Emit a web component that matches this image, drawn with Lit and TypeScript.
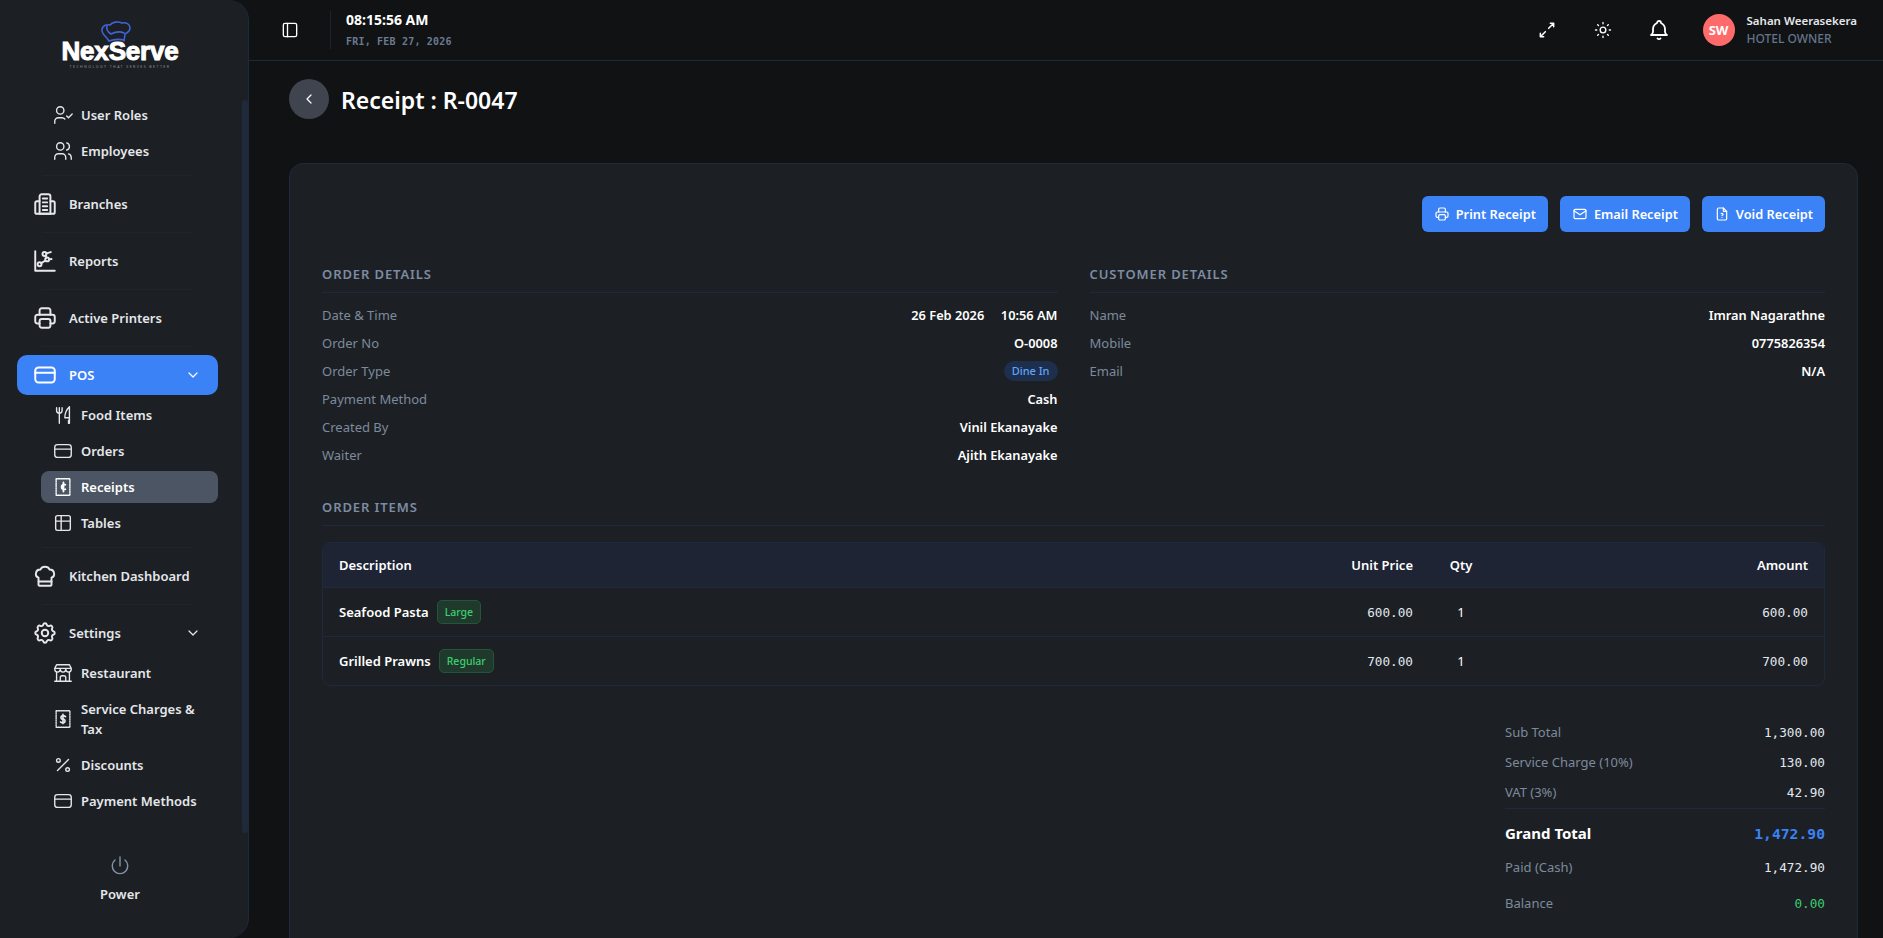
import { LitElement, html, css, svg } from 'lit';
import { customElement } from 'lit/decorators.js';
import { classMap } from 'lit/directives/class-map.js';

const icons: Record<string, unknown> = {
  userCheck: svg`<circle cx="9" cy="7" r="4"/><path d="M3 21v-2a4 4 0 0 1 4-4h4a4 4 0 0 1 3 1.4"/><path d="M16 13l2 2l4-4"/>`,
  users: svg`<circle cx="9" cy="7" r="4"/><path d="M3 21v-2a4 4 0 0 1 4-4h4a4 4 0 0 1 4 4v2"/><path d="M16 3.13a4 4 0 0 1 0 7.75"/><path d="M21 21v-2a4 4 0 0 0-3-3.85"/>`,
  building: svg`<path d="M7 21V5a2 2 0 0 1 2-2h6a2 2 0 0 1 2 2v16z"/><path d="M7 9.5H4.5A1.5 1.5 0 0 0 3 11v8.5A1.5 1.5 0 0 0 4.5 21h15a1.5 1.5 0 0 0 1.5-1.5V11a1.5 1.5 0 0 0-1.5-1.5H17"/><path d="M10 7h4M10 10.5h4M10 14h4M10 17.5h4"/>`,
  chartDots: svg`<path d="M3 3v18h18"/><circle cx="7" cy="15" r="1.8"/><circle cx="11.5" cy="5.5" r="1.8"/><circle cx="14" cy="10.5" r="1.8"/><path d="M12.4 7.1l.8 1.8M12.5 11.5l-4 2.5M13.3 5l4-1.2M15.8 10.5l2.2-.3"/>`,
  printer: svg`<path d="M17 17h2a2 2 0 0 0 2-2v-4a2 2 0 0 0-2-2H5a2 2 0 0 0-2 2v4a2 2 0 0 0 2 2h2"/><path d="M17 9V5a2 2 0 0 0-2-2H9a2 2 0 0 0-2 2v4"/><rect x="7" y="13" width="10" height="8" rx="2"/>`,
  card: svg`<rect x="3" y="5" width="18" height="14" rx="3"/><path d="M3 10h18"/>`,
  kitchen: svg`<path d="M19 3v12h-5c-.023-3.681.184-7.406 5-12zm0 12v6h-1v-3"/><path d="M8 4v17M5 4v3a3 3 0 1 0 6 0V4"/>`,
  receiptCent: svg`<path d="M4.5 3h15v18h-15z" stroke-dasharray="1.5 1.1"/><path stroke-width="2" d="M14.5 9.5a2.8 2.8 0 1 0 0 5M12.5 7v10"/>`,
  receiptDollar: svg`<path d="M4.5 3h15v18h-15z" stroke-dasharray="1.5 1.1"/><path stroke-width="1.8" d="M14.7 9.5A2 2 0 0 0 13 8.6h-2a2 2 0 0 0 0 3.7h2a2 2 0 0 1 0 3.7h-2a2 2 0 0 1-1.7-.9M12 7v10"/>`,
  table: svg`<rect x="4" y="4" width="16" height="16" rx="2"/><path d="M4 10h16M10 4v16"/>`,
  chefHat: svg`<path d="M12 3.5c2 0 3.6 1 4.3 2.6a3.9 3.9 0 0 1 1.7 7.5V20a1 1 0 0 1-1 1H7a1 1 0 0 1-1-1v-6.4a3.9 3.9 0 0 1 1.700-7.5C8.4 4.5 10 3.5 12 3.5z"/><path d="M6.2 17H18"/>`,
  settings: svg`<path d="M10.325 4.317c.426-1.756 2.924-1.756 3.35 0a1.724 1.724 0 0 0 2.573 1.066c1.543-.94 3.31.826 2.37 2.37a1.724 1.724 0 0 0 1.065 2.572c1.756.426 1.756 2.924 0 3.35a1.724 1.724 0 0 0-1.066 2.573c.94 1.543-.826 3.31-2.37 2.37a1.724 1.724 0 0 0-2.572 1.065c-.426 1.756-2.924 1.756-3.35 0a1.724 1.724 0 0 0-2.573-1.066c-1.543.94-3.31-.826-2.37-2.37a1.724 1.724 0 0 0-1.065-2.572c-1.756-.426-1.756-2.924 0-3.35a1.724 1.724 0 0 0 1.066-2.573c-.94-1.543.826-3.31 2.37-2.37c1 .608 2.296.07 2.572-1.065z"/><circle cx="12" cy="12" r="3"/>`,
  store: svg`<path d="M3 21h18"/><path d="M3 7v1a3 3 0 0 0 6 0V7m0 1a3 3 0 0 0 6 0V7m0 1a3 3 0 0 0 6 0V7H3l2-4h14l2 4"/><path d="M5 21V10.85M19 21V10.85M9 21v-4a2 2 0 0 1 2-2h2a2 2 0 0 1 2 2v4"/>`,
  percent: svg`<circle cx="17" cy="17" r="2"/><circle cx="7" cy="7" r="2"/><path d="M6 18L18 6"/>`,
  power: svg`<path d="M7 6a7.75 7.75 0 1 0 10 0"/><path d="M12 3v9"/>`,
  expand: svg`<path d="M16 4h4v4M14 10l6-6M8 20H4v-4M4 20l6-6"/>`,
  sun: svg`<circle cx="12" cy="12" r="3.4"/><path d="M3 12h1.5M12 3v1.5M19.5 12H21M12 19.5V21M5.6 5.6l1 1M18.4 5.6l-1 1M17.4 17.4l1 1M6.6 17.4l-1 1"/>`,
  bell: svg`<path d="M10 5a2 2 0 1 1 4 0a7 7 0 0 1 4 6v3a4 4 0 0 0 2 3H4a4 4 0 0 0 2-3v-3a7 7 0 0 1 4-6"/><path d="M10.5 20.5a2 2 0 0 0 3 0"/>`,
  panel: svg`<rect x="4" y="4" width="16" height="16" rx="2"/><path d="M9 4v16"/>`,
  mail: svg`<rect x="3" y="5" width="18" height="14" rx="2"/><path d="M3 7l9 6l9-6"/>`,
  fileQuestion: svg`<path d="M14 3v4a1 1 0 0 0 1 1h4"/><path d="M17 21H7a2 2 0 0 1-2-2V5a2 2 0 0 1 2-2h7l5 5v11a2 2 0 0 1-2 2z"/><path d="M12 17v.01M12 14a1.5 1.5 0 1 0-1.14-2.474"/>`,
  chevronDown: svg`<path d="M6 9l6 6l6-6"/>`,
  chevronLeft: svg`<path d="M15 6l-6 6l6 6"/>`,
};

type NavEntry = { type: 'main' | 'sub' | 'divider'; label?: string; icon?: string; chevron?: boolean; active?: boolean };

const navItems: NavEntry[] = [
  { type: 'sub', label: 'User Roles', icon: 'userCheck' },
  { type: 'sub', label: 'Employees', icon: 'users' },
  { type: 'divider' },
  { type: 'main', label: 'Branches', icon: 'building' },
  { type: 'divider' },
  { type: 'main', label: 'Reports', icon: 'chartDots' },
  { type: 'divider' },
  { type: 'main', label: 'Active Printers', icon: 'printer' },
  { type: 'divider' },
  { type: 'main', label: 'POS', icon: 'card', chevron: true, active: true },
  { type: 'sub', label: 'Food Items', icon: 'kitchen' },
  { type: 'sub', label: 'Orders', icon: 'card' },
  { type: 'sub', label: 'Receipts', icon: 'receiptCent', active: true },
  { type: 'sub', label: 'Tables', icon: 'table' },
  { type: 'divider' },
  { type: 'main', label: 'Kitchen Dashboard', icon: 'chefHat' },
  { type: 'divider' },
  { type: 'main', label: 'Settings', icon: 'settings', chevron: true },
  { type: 'sub', label: 'Restaurant', icon: 'store' },
  { type: 'sub', label: 'Service Charges & Tax', icon: 'receiptDollar' },
  { type: 'sub', label: 'Discounts', icon: 'percent' },
  { type: 'sub', label: 'Payment Methods', icon: 'card' },
];

const orderDetails = [
  ['Date & Time', '26 Feb 2026 \u00a0\u00a0\u00a0 10:56 AM'],
  ['Order No', 'O-0008'],
  ['Order Type', 'Dine In'],
  ['Payment Method', 'Cash'],
  ['Created By', 'Vinil Ekanayake'],
  ['Waiter', 'Ajith Ekanayake'],
];

const customerDetails = [
  ['Name', 'Imran Nagarathne'],
  ['Mobile', '0775826354'],
  ['Email', 'N/A'],
];

const orderItems = [
  { name: 'Seafood Pasta', size: 'Large', price: '600.00', qty: '1', amount: '600.00' },
  { name: 'Grilled Prawns', size: 'Regular', price: '700.00', qty: '1', amount: '700.00' },
];

const icon = (name: string, size: number, strokeWidth = 2) => html`
  <svg class="icon" width=${size} height=${size} viewBox="0 0 24 24" fill="none" stroke="currentColor"
    stroke-width=${strokeWidth} stroke-linecap="round" stroke-linejoin="round">${icons[name]}</svg>
`;

@customElement('app-root')
export class AppRoot extends LitElement {
  static styles = css`
    :host {
      display: flex;
      height: 938px;
      overflow: hidden;
      background: #101214;
      color: #fff;
      font-family: 'Noto Sans', 'Open Sans', sans-serif;
      font-size: 13px;
    }

    .icon { display: block; flex: none; }

    /* sidebar */
    .sidebar {
      width: 249px;
      flex: none;
      box-sizing: border-box;
      display: flex;
      flex-direction: column;
      background: #1c2024;
      border-right: 1px solid #1e293b;
      border-radius: 0 20px 20px 0;
    }

    .logo {
      height: 95px;
      flex: none;
      display: flex;
      flex-direction: column;
      align-items: center;
      padding: 20px 8px 0 0;
      box-sizing: border-box;
    }

    .logo-hat { margin-left: -8px; }

    .logo-name {
      font-family: 'Liberation Sans', sans-serif;
      font-weight: 700;
      font-size: 26px;
      line-height: 20px;
      letter-spacing: -0.2px;
      margin-top: -3px;
      -webkit-text-stroke: 1px #fff;
    }

    .logo-tag {
      font-size: 3.6px;
      line-height: 6px;
      letter-spacing: 1.4px;
      color: #8a8f96;
      margin-top: 3px;
    }

    .nav-wrap {
      flex: none;
      height: 738px;
      display: flex;
    }

    .nav {
      flex: 1;
      padding: 0 24px 0 17px;
      min-width: 0;
    }

    .thumb {
      width: 6px;
      flex: none;
      margin-top: 5px;
      background: #1e293b;
      border-radius: 3px;
    }

    .divider {
      height: 1px;
      margin: 8px 25px;
      background: #1e2530;
    }

    .item {
      display: flex;
      align-items: center;
      color: #e5e7eb;
      font-weight: 600;
      font-size: 13px;
      line-height: 20px;
    }

    .item.main {
      height: 40px;
      padding: 0 17px 0 15px;
      gap: 11px;
      border-radius: 10px;
    }

    .item.main.active {
      background: #3b82f6;
      color: #fff;
    }

    .item.sub {
      margin: 4px 0 4px 24px;
      padding: 6px 12px 6px 11px;
      gap: 7px;
      border-radius: 8px;
    }

    .item.sub .icon { margin: -1px 0; }

    .item.sub.active {
      background: #4b5563;
      color: #fff;
    }

    .item .label { flex: 1; }

    .power {
      display: flex;
      flex-direction: column;
      align-items: center;
      gap: 6px;
      padding: 21px 8px 0 0;
      color: #e5e7eb;
      font-weight: 600;
      font-size: 13px;
      line-height: 20px;
    }

    .power .icon { color: #8493a8; }

    /* header */
    .page {
      flex: 1;
      min-width: 0;
      display: flex;
      flex-direction: column;
    }

    .header {
      height: 61px;
      flex: none;
      box-sizing: border-box;
      display: flex;
      align-items: center;
      border-bottom: 1px solid #1e293b;
      padding: 0 26px 0 31px;
    }

    .divider-v {
      width: 1px;
      height: 38px;
      background: #1f2429;
      margin: 0 15px 0 30px;
    }

    .clock { display: flex; flex-direction: column; gap: 6px; }
    .clock-time { font-size: 14px; font-weight: 700; line-height: 18px; }
    .clock-date {
      font-family: 'DejaVu Sans Mono', monospace;
      font-size: 10px;
      line-height: 14px;
      font-weight: 700;
      letter-spacing: 0.2px;
      color: #6b7a90;
    }

    .header-right { margin-left: auto; display: flex; align-items: center; }
    .header-btn { width: 56px; display: flex; justify-content: center; }

    .avatar {
      width: 32px;
      height: 32px;
      border-radius: 50%;
      background: #ff6b6b;
      display: flex;
      align-items: center;
      justify-content: center;
      font-size: 13px;
      font-weight: 700;
      margin: 0 12px 0 16px;
    }

    .user-name { font-size: 11.5px; font-weight: 600; line-height: 18px; color: #e5e7eb; }
    .user-role { font-size: 12px; line-height: 18px; color: #64748b; font-weight: 500; }

    /* content */
    .content { padding: 18px 25px 0 40px; }

    .page-title {
      display: flex;
      align-items: center;
      gap: 12px;
      height: 40px;
      margin-bottom: 44px;
    }

    .page-title h1 { margin: 0; padding-top: 2px; font-size: 23px; font-weight: 600; line-height: 32px; }

    .back {
      width: 40px;
      height: 40px;
      border-radius: 50%;
      background: #3f444e;
      display: flex;
      align-items: center;
      justify-content: center;
    }

    .card {
      background: #1c2024;
      border: 1px solid #1e293b;
      border-radius: 14px;
      padding: 32px 32px 60px;
    }

    .actions { display: flex; justify-content: flex-end; gap: 12px; margin-bottom: 33px; }

    .btn {
      height: 36px;
      display: flex;
      align-items: center;
      gap: 6px;
      padding: 0 12px;
      background: #3b82f6;
      border-radius: 6px;
      font-size: 12.8px;
      font-weight: 600;
      box-sizing: border-box;
    }

    .details { display: grid; grid-template-columns: 1fr 1fr; gap: 32px; }

    .section-title {
      color: #7c8ca3;
      font-size: 13px;
      font-weight: 600;
      letter-spacing: 0.9px;
      line-height: 18px;
      padding-bottom: 9px;
      border-bottom: 1px solid #1e293b;
      margin-bottom: 8px;
    }

    .row {
      display: flex;
      justify-content: space-between;
      align-items: center;
      height: 28px;
    }

    .row .key { color: #7d8a9c; }
    .row .value { font-weight: 600; font-size: 12.8px; }

    .pill {
      background: #1e2e4d;
      color: #60a5fa;
      border-radius: 10px;
      padding: 0 8px;
      font-size: 11px;
      font-weight: 500;
      line-height: 20px;
    }

    .items-title { margin-top: 29px; margin-bottom: 16px; }

    .table {
      border: 1px solid #1e293b;
      border-radius: 8px;
      overflow: hidden;
    }

    .tr {
      display: grid;
      grid-template-columns: 1fr 120px 64px 331px;
      align-items: center;
      height: 48px;
      border-top: 1px solid #1e293b;
    }

    .tr.head {
      height: 44px;
      border-top: none;
      background: #1e2433;
      font-weight: 600;
    }

    .td { padding: 0 16px; }
    .td.num { text-align: right; }
    .td.qty { padding: 0; text-align: center; }
    .mono { font-family: 'DejaVu Sans Mono', monospace; font-size: 12.7px; color: #e2e8f0; }

    .item-name { display: flex; align-items: center; gap: 8px; font-weight: 600; font-size: 13px; }

    .size {
      height: 24px;
      box-sizing: border-box;
      padding: 0 7px;
      display: flex;
      align-items: center;
      border-radius: 5px;
      background: #1f3a2c;
      border: 1px solid #24543a;
      color: #3ecf70;
      font-size: 10.5px;
      font-weight: 500;
    }

    .totals { width: 320px; margin: 31px 0 0 auto; }

    .total-row {
      display: flex;
      justify-content: space-between;
      align-items: center;
      height: 30px;
      color: #7d8a9c;
    }

    .total-row.grand {
      height: 48px;
      margin-top: 1px;
      border-top: 1px solid #1e293b;
      color: #fff;
      font-size: 15px;
      font-weight: 700;
    }

    .total-row.grand .mono { font-size: 14.7px; font-weight: 700; color: #3b82f6; }
    .total-row.paid { height: 20px; }
    .total-row.balance { height: 20px; margin-top: 16px; }
    .total-row.balance .mono { color: #3ecf70; }
  `;

  private renderNavEntry(entry: NavEntry) {
    if (entry.type === 'divider') return html`<div class="divider"></div>`;
    const isMain = entry.type === 'main';
    return html`
      <div class=${classMap({ item: true, main: isMain, sub: !isMain, active: !!entry.active })}>
        ${icon(entry.icon!, isMain ? 26 : 22, isMain ? 1.8 : 1.5)}
        <span class="label">${entry.label}</span>
        ${entry.chevron ? icon('chevronDown', 16, 1.8) : ''}
      </div>
    `;
  }

  private renderSidebar() {
    return html`
      <aside class="sidebar">
        <div class="logo">
          <svg class="logo-hat" width="32" height="24" viewBox="0 0 32 24" fill="none" stroke="#3f63d8" stroke-width="1.6" stroke-linecap="round" stroke-linejoin="round">
            <path d="M9 21C6 16 1 14 2 9c.6-3 4-5 8-4c2-3 8-4 12-2c4-1 8 1 8 5c0 3-3 5-5 6l-1 7"/>
            <path d="M9 21c5-2 10-2 15-1M7 6c-1 3 1 6 4 8c4-2 9-3 13-1"/>
          </svg>
          <div class="logo-name">NexServe</div>
          <div class="logo-tag">TECHNOLOGY THAT SERVES BETTER</div>
        </div>
        <div class="nav-wrap">
          <nav class="nav">${navItems.map((entry) => this.renderNavEntry(entry))}</nav>
          <div class="thumb"></div>
        </div>
        <div class="power">
          ${icon('power', 24, 1.4)}
          <span>Power</span>
        </div>
      </aside>
    `;
  }

  private renderHeader() {
    return html`
      <header class="header">
        ${icon('panel', 20, 1.6)}
        <div class="divider-v"></div>
        <div class="clock">
          <div class="clock-time">08:15:56 AM</div>
          <div class="clock-date">FRI, FEB 27, 2026</div>
        </div>
        <div class="header-right">
          <div class="header-btn">${icon('expand', 20, 1.8)}</div>
          <div class="header-btn">${icon('sun', 20, 1.6)}</div>
          <div class="header-btn">${icon('bell', 24, 1.8)}</div>
          <div class="avatar">SW</div>
          <div>
            <div class="user-name">Sahan Weerasekera</div>
            <div class="user-role">HOTEL OWNER</div>
          </div>
        </div>
      </header>
    `;
  }

  private renderDetails(title: string, rows: string[][]) {
    return html`
      <section>
        <div class="section-title">${title}</div>
        ${rows.map(([key, value]) => html`
          <div class="row">
            <span class="key">${key}</span>
            ${key === 'Order Type'
              ? html`<span class="pill">${value}</span>`
              : html`<span class="value">${value}</span>`}
          </div>
        `)}
      </section>
    `;
  }

  render() {
    return html`
      ${this.renderSidebar()}
      <div class="page">
        ${this.renderHeader()}
        <div class="content">
          <div class="page-title">
            <div class="back">${icon('chevronLeft', 16, 1.8)}</div>
            <h1>Receipt : R-0047</h1>
          </div>
          <div class="card">
            <div class="actions">
              <div class="btn">${icon('printer', 16, 1.8)}Print Receipt</div>
              <div class="btn">${icon('mail', 16, 1.8)}Email Receipt</div>
              <div class="btn">${icon('fileQuestion', 16, 1.8)}Void Receipt</div>
            </div>
            <div class="details">
              ${this.renderDetails('ORDER DETAILS', orderDetails)}
              ${this.renderDetails('CUSTOMER DETAILS', customerDetails)}
            </div>
            <div class="section-title items-title">ORDER ITEMS</div>
            <div class="table">
              <div class="tr head">
                <div class="td">Description</div>
                <div class="td num">Unit Price</div>
                <div class="td qty">Qty</div>
                <div class="td num">Amount</div>
              </div>
              ${orderItems.map((row) => html`
                <div class="tr">
                  <div class="td item-name">${row.name}<span class="size">${row.size}</span></div>
                  <div class="td num mono">${row.price}</div>
                  <div class="td qty">${row.qty}</div>
                  <div class="td num mono">${row.amount}</div>
                </div>
              `)}
            </div>
            <div class="totals">
              <div class="total-row"><span>Sub Total</span><span class="mono">1,300.00</span></div>
              <div class="total-row"><span>Service Charge (10%)</span><span class="mono">130.00</span></div>
              <div class="total-row"><span>VAT (3%)</span><span class="mono">42.90</span></div>
              <div class="total-row grand"><span>Grand Total</span><span class="mono">1,472.90</span></div>
              <div class="total-row paid"><span>Paid (Cash)</span><span class="mono">1,472.90</span></div>
              <div class="total-row balance"><span>Balance</span><span class="mono">0.00</span></div>
            </div>
          </div>
        </div>
      </div>
    `;
  }
}
